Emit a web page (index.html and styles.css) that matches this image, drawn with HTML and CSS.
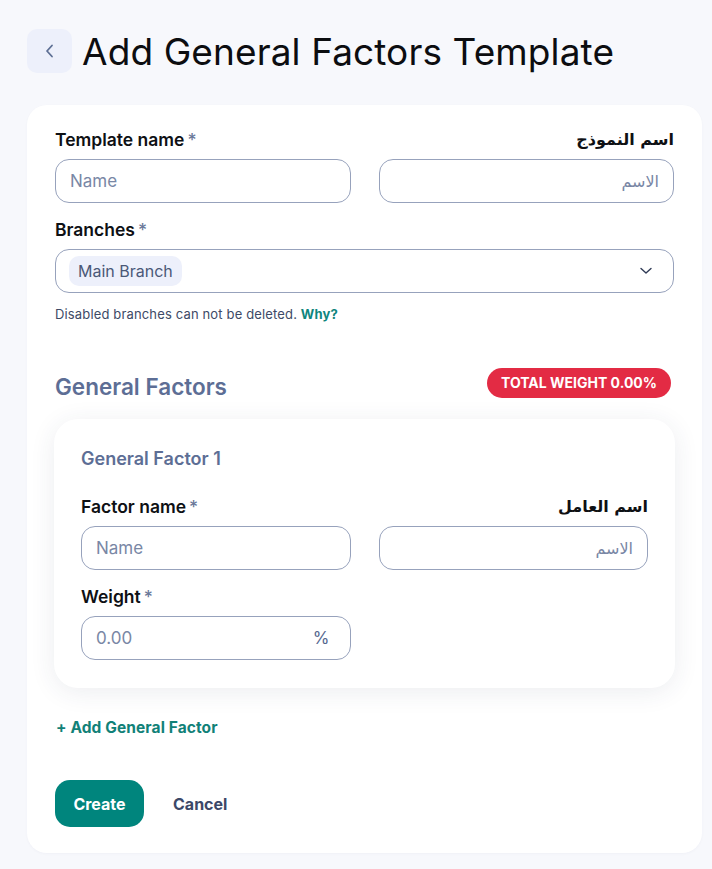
FILE: index.html
```html
<!DOCTYPE html>
<html lang="en">
<head>
<meta charset="utf-8">
<title>Add General Factors Template</title>
<link rel="stylesheet" href="styles.css">
</head>
<body>
<div class="page">
  <header class="page-header">
    <button class="back-btn" aria-label="Back">
      <svg width="12" height="16" viewBox="0 0 12 16"><path d="M8 2.5 L3 8 L8 13.5" fill="none" stroke="#5d6f94" stroke-width="1.8" stroke-linecap="round" stroke-linejoin="round"/></svg>
    </button>
    <h1 class="page-title">Add General Factors Template</h1>
  </header>

  <main class="card">
    <div class="grid-2">
      <div class="field">
        <label class="label">Template name<span class="req">*</span></label>
        <div class="input"><span class="placeholder">Name</span></div>
      </div>
      <div class="field">
        <label class="label label-rtl" dir="rtl">اسم النموذج</label>
        <div class="input input-rtl" dir="rtl"><span class="placeholder">الاسم</span></div>
      </div>
    </div>

    <div class="field field-gap">
      <label class="label">Branches<span class="req">*</span></label>
      <div class="input select">
        <span class="chip">Main Branch</span>
        <svg class="caret" width="14" height="8" viewBox="0 0 14 8"><path d="M2 1.5 L7 6 L12 1.5" fill="none" stroke="#2f3a55" stroke-width="1.4" stroke-linecap="round" stroke-linejoin="round"/></svg>
      </div>
    </div>
    <p class="helper">Disabled branches can not be deleted. <a class="why">Why?</a></p>

    <div class="section-head">
      <h2 class="section-title">General Factors</h2>
      <span class="badge">TOTAL WEIGHT 0.00%</span>
    </div>

    <section class="factor-card">
      <h3 class="factor-title">General Factor 1</h3>
      <div class="grid-2">
        <div class="field">
          <label class="label">Factor name<span class="req">*</span></label>
          <div class="input"><span class="placeholder">Name</span></div>
        </div>
        <div class="field">
          <label class="label label-rtl" dir="rtl">اسم العامل</label>
          <div class="input input-rtl" dir="rtl"><span class="placeholder">الاسم</span></div>
        </div>
      </div>
      <div class="grid-2 field-gap">
        <div class="field">
          <label class="label">Weight<span class="req">*</span></label>
          <div class="input input-suffix"><span class="placeholder">0.00</span><span class="suffix">%</span></div>
        </div>
      </div>
    </section>

    <a class="add-link">+ Add General Factor</a>

    <div class="actions">
      <button class="btn-primary">Create</button>
      <button class="btn-text">Cancel</button>
    </div>
  </main>
</div>
</body>
</html>
```

FILE: styles.css
```css
* { box-sizing: border-box; }
html, body { margin: 0; padding: 0; }
body {
  background: #f7f8fc;
  font-family: Inter, "Noto Sans", "DejaVu Sans", sans-serif;
  color: #111318;
}
.page {
  padding: 29px 10px 15px 27px;
}
.page-header {
  display: flex;
  align-items: center;
  gap: 10px;
  height: 44px;
}
.back-btn {
  width: 45px;
  height: 44px;
  border: none;
  border-radius: 10px;
  background: #edf0fb;
  display: flex;
  align-items: center;
  justify-content: center;
  padding: 0;
}
.page-title {
  margin: 2px 0 0 0;
  font-size: 37px;
  font-weight: 400;
  line-height: 44px;
  color: #0c0d10;
  letter-spacing: 0.1px;
}
.card {
  margin-top: 32px;
  background: #fff;
  border-radius: 20px;
  padding: 24px 28px 26px 28px;
  width: 675px;
  box-shadow: 0 1px 3px rgba(30, 40, 80, 0.03);
}
.grid-2 {
  display: grid;
  grid-template-columns: 1fr 1fr;
  column-gap: 28px;
}
.field { display: flex; flex-direction: column; }
.field-gap { margin-top: 16px; }
.label {
  font-size: 17.5px;
  font-weight: 600;
  line-height: 22px;
  margin-bottom: 8px;
  color: #0e1014;
  letter-spacing: 0;
}
.label-rtl {
  text-align: right;
  font-family: "DejaVu Sans", sans-serif;
  font-weight: 700;
  font-size: 16px;
  letter-spacing: 0;
}
.req {
  color: #6a7899;
  font-weight: 500;
  margin-left: 3px;
}
.input {
  height: 44px;
  border: 1px solid #97a2bc;
  border-radius: 14px;
  display: flex;
  align-items: center;
  padding: 0 14px;
  background: #fff;
}
.input-rtl { justify-content: flex-start; }
.input-rtl .placeholder { font-family: "DejaVu Sans", sans-serif; font-size: 16px; }
.placeholder {
  color: #7987a5;
  font-size: 17px;
}
.select {
  justify-content: space-between;
  padding-left: 13px;
  padding-right: 20px;
}
.chip {
  background: #edf0fb;
  color: #4a5877;
  font-size: 16px;
  line-height: 30px;
  height: 30px;
  padding: 0 9px;
  border-radius: 10px;
}
.caret { display: block; }
.helper {
  margin: 12px 0 0 0;
  font-size: 13px;
  line-height: 18px;
  color: #3d4a66;
  letter-spacing: 0.15px;
}
.why {
  color: #0e857d;
  font-weight: 700;
}
.section-head {
  margin-top: 45px;
  display: flex;
  justify-content: space-between;
  align-items: center;
  height: 30px;
}
.section-title {
  margin: 6px 0 0 0;
  font-size: 22.5px;
  font-weight: 600;
  color: #5d6e95;
  letter-spacing: 0;
}
.badge {
  background: #e32b44;
  color: #fff;
  font-size: 14px;
  font-weight: 700;
  height: 30px;
  line-height: 30px;
  padding: 0 14px;
  border-radius: 15px;
  margin-right: 3px;
  letter-spacing: 0;
}
.factor-card {
  margin: 21px -1px 0 -1px;
  background: #fff;
  border-radius: 24px;
  padding: 29px 27px 28px 27px;
  box-shadow: 0 4px 26px rgba(40, 50, 90, 0.09);
}
.factor-title {
  margin: 0 0 26px 0;
  font-size: 18px;
  line-height: 22px;
  font-weight: 600;
  color: #5d6e95;
  letter-spacing: 0;
}
.input-suffix { justify-content: space-between; padding-right: 20px; }
.suffix {
  color: #56688f;
  font-size: 17px;
}
.add-link {
  display: block;
  margin-top: 30px;
  font-size: 15.5px;
  line-height: 20px;
  font-weight: 700;
  color: #118178;
  padding-left: 1px;
  letter-spacing: 0.1px;
}
.actions {
  margin-top: 42px;
  display: flex;
  align-items: center;
  gap: 29px;
}
.btn-primary {
  background: #00857d;
  color: #fff;
  border: none;
  height: 47px;
  width: 89px;
  border-radius: 15px;
  font-family: inherit;
  font-size: 16px;
  font-weight: 700;
}
.btn-text {
  background: none;
  border: none;
  padding: 0;
  font-family: inherit;
  font-size: 16px;
  font-weight: 700;
  color: #3c4868;
}
```
